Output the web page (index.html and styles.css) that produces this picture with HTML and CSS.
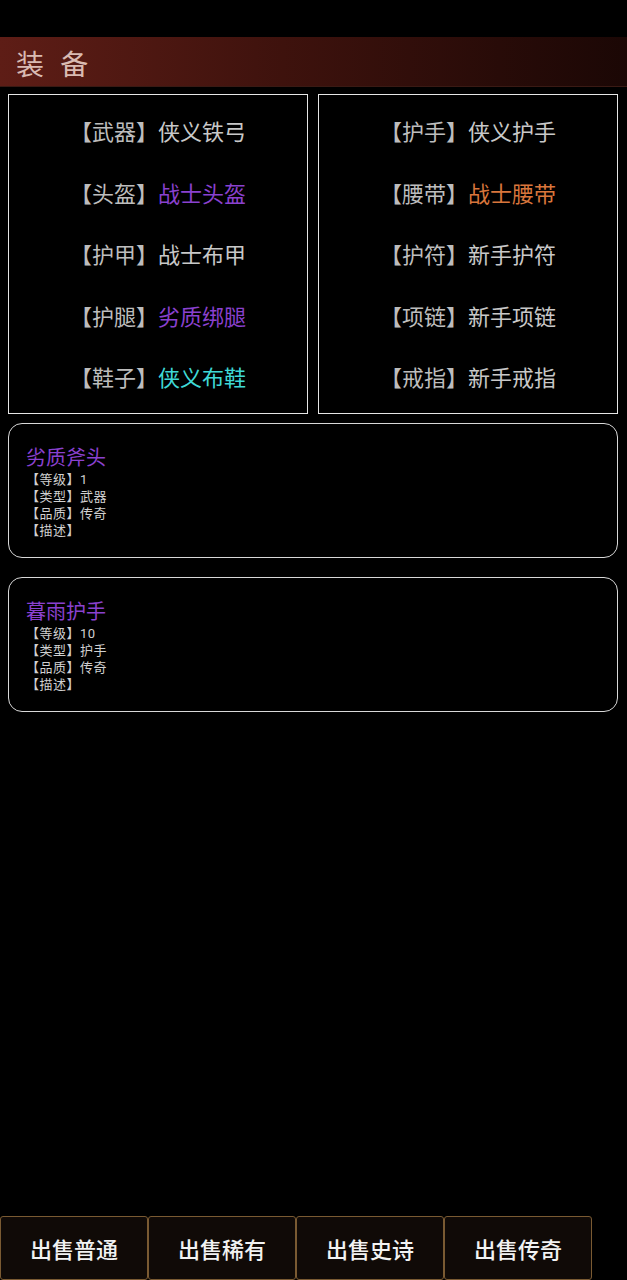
FILE: index.html
```html
<!DOCTYPE html>
<html>
<head>
    <meta charset="utf-8">
    <link rel="stylesheet" href="styles.css">
</head>
<body>
    <div class="page">
        <div class="title-bar">装 备</div>

        <div class="slots">
            <div class="slot-box">
                <div class="slot"><span class="label">【武器】</span><span class="item">侠义铁弓</span></div>
                <div class="slot"><span class="label">【头盔】</span><span class="item epic">战士头盔</span></div>
                <div class="slot"><span class="label">【护甲】</span><span class="item">战士布甲</span></div>
                <div class="slot"><span class="label">【护腿】</span><span class="item epic">劣质绑腿</span></div>
                <div class="slot"><span class="label">【鞋子】</span><span class="item rare">侠义布鞋</span></div>
            </div>
            <div class="slot-box">
                <div class="slot"><span class="label">【护手】</span><span class="item">侠义护手</span></div>
                <div class="slot"><span class="label">【腰带】</span><span class="item legend">战士腰带</span></div>
                <div class="slot"><span class="label">【护符】</span><span class="item">新手护符</span></div>
                <div class="slot"><span class="label">【项链】</span><span class="item">新手项链</span></div>
                <div class="slot"><span class="label">【戒指】</span><span class="item">新手戒指</span></div>
            </div>
        </div>

        <div class="card">
            <div class="card-title">劣质斧头</div>
            <div class="card-line">【等级】1</div>
            <div class="card-line">【类型】武器</div>
            <div class="card-line">【品质】传奇</div>
            <div class="card-line">【描述】</div>
        </div>

        <div class="card">
            <div class="card-title">暮雨护手</div>
            <div class="card-line">【等级】10</div>
            <div class="card-line">【类型】护手</div>
            <div class="card-line">【品质】传奇</div>
            <div class="card-line">【描述】</div>
        </div>

        <div class="sell-bar">
            <button class="sell">出售普通</button>
            <button class="sell">出售稀有</button>
            <button class="sell">出售史诗</button>
            <button class="sell">出售传奇</button>
        </div>
    </div>
</body>
</html>
```

FILE: styles.css
```css
body {
    margin: 0;
    background-color: #000;
    font-family: "Noto Sans CJK SC", sans-serif;
    color: #c8c8c8;
}
.page {
    min-height: 1280px;
    display: flex;
    flex-direction: column;
    padding-top: 37px;
    box-sizing: border-box;
    background-color: #000;
}
.title-bar {
    height: 50px;
    line-height: 52px;
    padding-left: 16px;
    font-size: 28px;
    color: #d9bab2;
    letter-spacing: 4px;
    word-spacing: 2px;
    background: linear-gradient(to right, #5e1d16 0%, #3e120d 45%, #1b0705 100%);
    border-bottom: 1px solid #3a1a14;
    box-sizing: border-box;
}
.slots {
    display: flex;
    gap: 10px;
    padding: 0 9px 0 8px;
    margin-top: 7px;
}
.slot-box {
    flex: 1;
    border: 1px solid #e6e6e6;
    padding: 5px 0 5px;
}
.slot {
    height: 61.5px;
    line-height: 61.5px;
    text-align: center;
    font-size: 22px;
}
.label { color: #bdbdbd; }
.item { color: #c8c8c8; }
.epic { color: #8a41cf; }
.rare { color: #3fd8d6; }
.legend { color: #d8763c; }

.card {
    margin: 9px 9px 10px 8px;
    border: 1px solid #d8d8d8;
    border-radius: 14px;
    padding: 19px 17px 18px;
}
.card + .card { margin-top: 9px; }
.card-title {
    font-size: 20px;
    line-height: 28px;
    color: #8a41cf;
}
.card-line {
    font-family: Roboto, "Noto Sans CJK SC", sans-serif;
    font-size: 13px;
    line-height: 17px;
    letter-spacing: 0.5px;
    color: #d0d0d0;
}

.sell-bar {
    margin-top: auto;
    display: flex;
}
.sell {
    width: 148px;
    height: 64px;
    margin: 0;
    padding: 0;
    background-color: #100a07;
    border: 1px solid #7a5a32;
    border-radius: 3px;
    color: #f2f2f2;
    font-family: "Noto Sans CJK SC", sans-serif;
    font-size: 22px;
    font-weight: 500;
}
```
